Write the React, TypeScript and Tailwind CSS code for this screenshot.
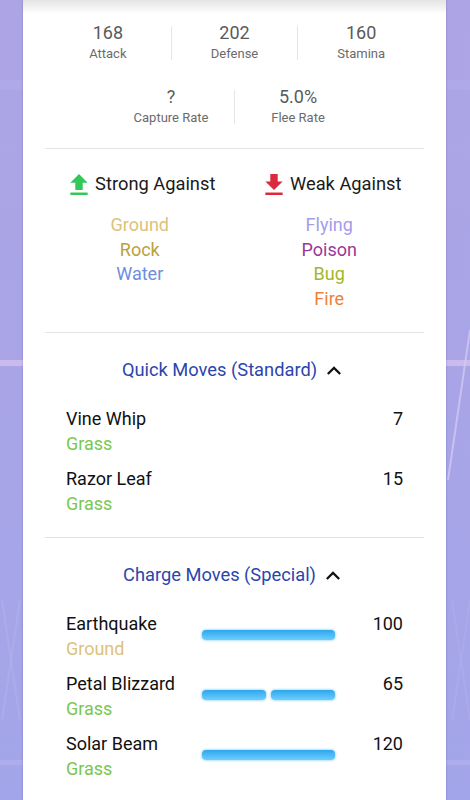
import React from 'react';

const font = { fontFamily: 'Roboto, "Noto Sans", Arial, sans-serif' };

const StatCell: React.FC<{ value: string; label: string }> = ({ value, label }) => (
  <div className="flex flex-col items-center w-[126px]">
    <span className="text-[18px] leading-[20px] text-[#5a5a5a]">{value}</span>
    <span className="text-[13px] leading-[16px] mt-[3px] text-[#6b6b6b]">{label}</span>
  </div>
);

const VDivider: React.FC = () => <div className="w-px h-[34px] bg-[#e6e6e6]" />;

const HDivider: React.FC = () => <div className="h-px bg-[#e2e2e2]" />;

const UpArrow: React.FC = () => (
  <svg width="18" height="21" viewBox="5 3 14 17" className="shrink-0">
    <path d="M9 16h6v-6h4l-7-7-7 7h4z" fill="#34c759" />
    <path d="M5 18h14v2H5z" fill="#34c759" />
  </svg>
);

const DownArrow: React.FC = () => (
  <svg width="18" height="21" viewBox="5 3 14 17" className="shrink-0">
    <path d="M19 9h-4V3H9v6H5l7 7 7-7z" fill="#dc2a3c" />
    <path d="M5 18h14v2H5z" fill="#dc2a3c" />
  </svg>
);

const ChevronUp: React.FC = () => (
  <svg width="14" height="9" viewBox="6 8 12 7.41">
    <path d="M12 8l-6 6 1.41 1.41L12 10.83l4.59 4.58L18 14z" fill="#111" />
  </svg>
);

const Bar: React.FC<{ segments: number }> = ({ segments }) => (
  <div className="flex gap-[5px] w-[133px] h-[10px] -mt-[2px]">
    {Array.from({ length: segments }).map((_, i) => (
      <div
        key={i}
        className="flex-1 rounded-[4px] bg-gradient-to-b from-[#2aa6ef] to-[#6ccdfb] shadow-[0_0_2px_1px_rgba(120,200,250,0.55)]"
      />
    ))}
  </div>
);

type Move = { name: string; type: string; color: string; power: number; bars?: number };

const quickMoves: Move[] = [
  { name: 'Vine Whip', type: 'Grass', color: '#78c850', power: 7 },
  { name: 'Razor Leaf', type: 'Grass', color: '#78c850', power: 15 },
];

const chargeMoves: Move[] = [
  { name: 'Earthquake', type: 'Ground', color: '#dcc27a', power: 100, bars: 1 },
  { name: 'Petal Blizzard', type: 'Grass', color: '#78c850', power: 65, bars: 2 },
  { name: 'Solar Beam', type: 'Grass', color: '#78c850', power: 120, bars: 1 },
];

const MoveRow: React.FC<{ move: Move }> = ({ move }) => (
  <div className="flex items-center">
    <div className="flex flex-col w-[136px] shrink-0">
      <span className="text-[18px] leading-[25px] text-[#111] whitespace-nowrap">{move.name}</span>
      <span className="text-[18px] leading-[25px]" style={{ color: move.color }}>
        {move.type}
      </span>
    </div>
    {move.bars ? <Bar segments={move.bars} /> : null}
    <div className="flex-1 self-start text-right text-[18px] leading-[25px] text-[#111]">{move.power}</div>
  </div>
);

const SectionHeader: React.FC<{ title: string }> = ({ title }) => (
  <div className="flex items-center justify-center gap-[10px] h-[24px] pr-[6px]">
    <span className="text-[18.3px] leading-[24px] text-[#2c45ad]">{title}</span>
    <ChevronUp />
  </div>
);

const Background: React.FC = () => (
  <svg className="absolute inset-0 w-full h-full" viewBox="0 0 470 800" preserveAspectRatio="none">
    <defs>
      <linearGradient id="bg" x1="0" y1="0" x2="0" y2="1">
        <stop offset="0" stopColor="#ada4e4" />
        <stop offset="1" stopColor="#a3a5ea" />
      </linearGradient>
    </defs>
    <rect width="470" height="800" fill="url(#bg)" />
    <rect x="0" y="360" width="470" height="6" fill="#d9c5ee" opacity="0.7" />
    <rect x="0" y="80" width="470" height="10" fill="#b7b0ec" opacity="0.4" />
    <rect x="0" y="760" width="470" height="5" fill="#bcbaf0" opacity="0.4" />
    <line x1="470" y1="330" x2="448" y2="480" stroke="#d6cdf5" strokeWidth="2" opacity="0.7" />
    <line x1="2" y1="600" x2="20" y2="720" stroke="#b3b2ef" strokeWidth="2" opacity="0.5" />
    <line x1="20" y1="600" x2="2" y2="720" stroke="#b3b2ef" strokeWidth="2" opacity="0.5" />
    <line x1="452" y1="600" x2="470" y2="720" stroke="#b3b2ef" strokeWidth="2" opacity="0.4" />
    <line x1="470" y1="600" x2="452" y2="720" stroke="#b3b2ef" strokeWidth="2" opacity="0.4" />
  </svg>
);

export default function App() {
  return (
    <div className="relative w-[470px] h-[800px] overflow-hidden" style={font}>
      <Background />
      <div className="relative ml-[23px] w-[423px] h-[800px] bg-white shadow-[0_0_2px_rgba(60,50,120,0.35)]">
        <div className="absolute top-0 left-0 right-0 h-[14px] bg-gradient-to-b from-[#e4e4e4] to-white" />
        <div className="relative px-[22px]">
          {/* stats */}
          <div className="flex items-center pt-[23px]">
            <StatCell value="168" label="Attack" />
            <VDivider />
            <StatCell value="202" label="Defense" />
            <VDivider />
            <StatCell value="160" label="Stamina" />
          </div>
          <div className="flex items-center justify-center mt-[25px]">
            <StatCell value="?" label="Capture Rate" />
            <VDivider />
            <StatCell value="5.0%" label="Flee Rate" />
          </div>
          <div className="mt-[22px]">
            <HDivider />
          </div>

          {/* strong / weak */}
          <div className="flex pt-[23px] pb-[21px]">
            <div className="flex-1 flex flex-col items-center">
              <div className="flex items-center gap-[7px] h-[24px] pl-[6px]">
                <UpArrow />
                <span className="text-[18.3px] leading-[24px] text-[#1a1a1a]">Strong Against</span>
              </div>
              <div className="flex flex-col items-center mt-[17px] text-[18px] leading-[24.5px]">
                <span className="text-[#dcc27a]">Ground</span>
                <span className="text-[#b8a23c]">Rock</span>
                <span className="text-[#6d8ee0]">Water</span>
              </div>
            </div>
            <div className="flex-1 flex flex-col items-center">
              <div className="flex items-center gap-[7px] h-[24px] pl-[8px]">
                <DownArrow />
                <span className="text-[18.3px] leading-[24px] text-[#1a1a1a]">Weak Against</span>
              </div>
              <div className="flex flex-col items-center mt-[17px] text-[18px] leading-[24.5px]">
                <span className="text-[#a69cec]">Flying</span>
                <span className="text-[#99389a]">Poison</span>
                <span className="text-[#a4b62a]">Bug</span>
                <span className="text-[#ee8136]">Fire</span>
              </div>
            </div>
          </div>
          <HDivider />

          {/* quick moves */}
          <div className="pt-[25px]">
            <SectionHeader title="Quick Moves (Standard)" />
          </div>
          <div className="flex flex-col gap-[10px] px-[21px] pt-[24px] pb-[21px]">
            {quickMoves.map((m) => (
              <MoveRow key={m.name} move={m} />
            ))}
          </div>
          <HDivider />

          {/* charge moves */}
          <div className="pt-[25px]">
            <SectionHeader title="Charge Moves (Special)" />
          </div>
          <div className="flex flex-col gap-[10px] px-[21px] pt-[24px] pb-[21px]">
            {chargeMoves.map((m) => (
              <MoveRow key={m.name} move={m} />
            ))}
          </div>
        </div>
      </div>
    </div>
  );
}
